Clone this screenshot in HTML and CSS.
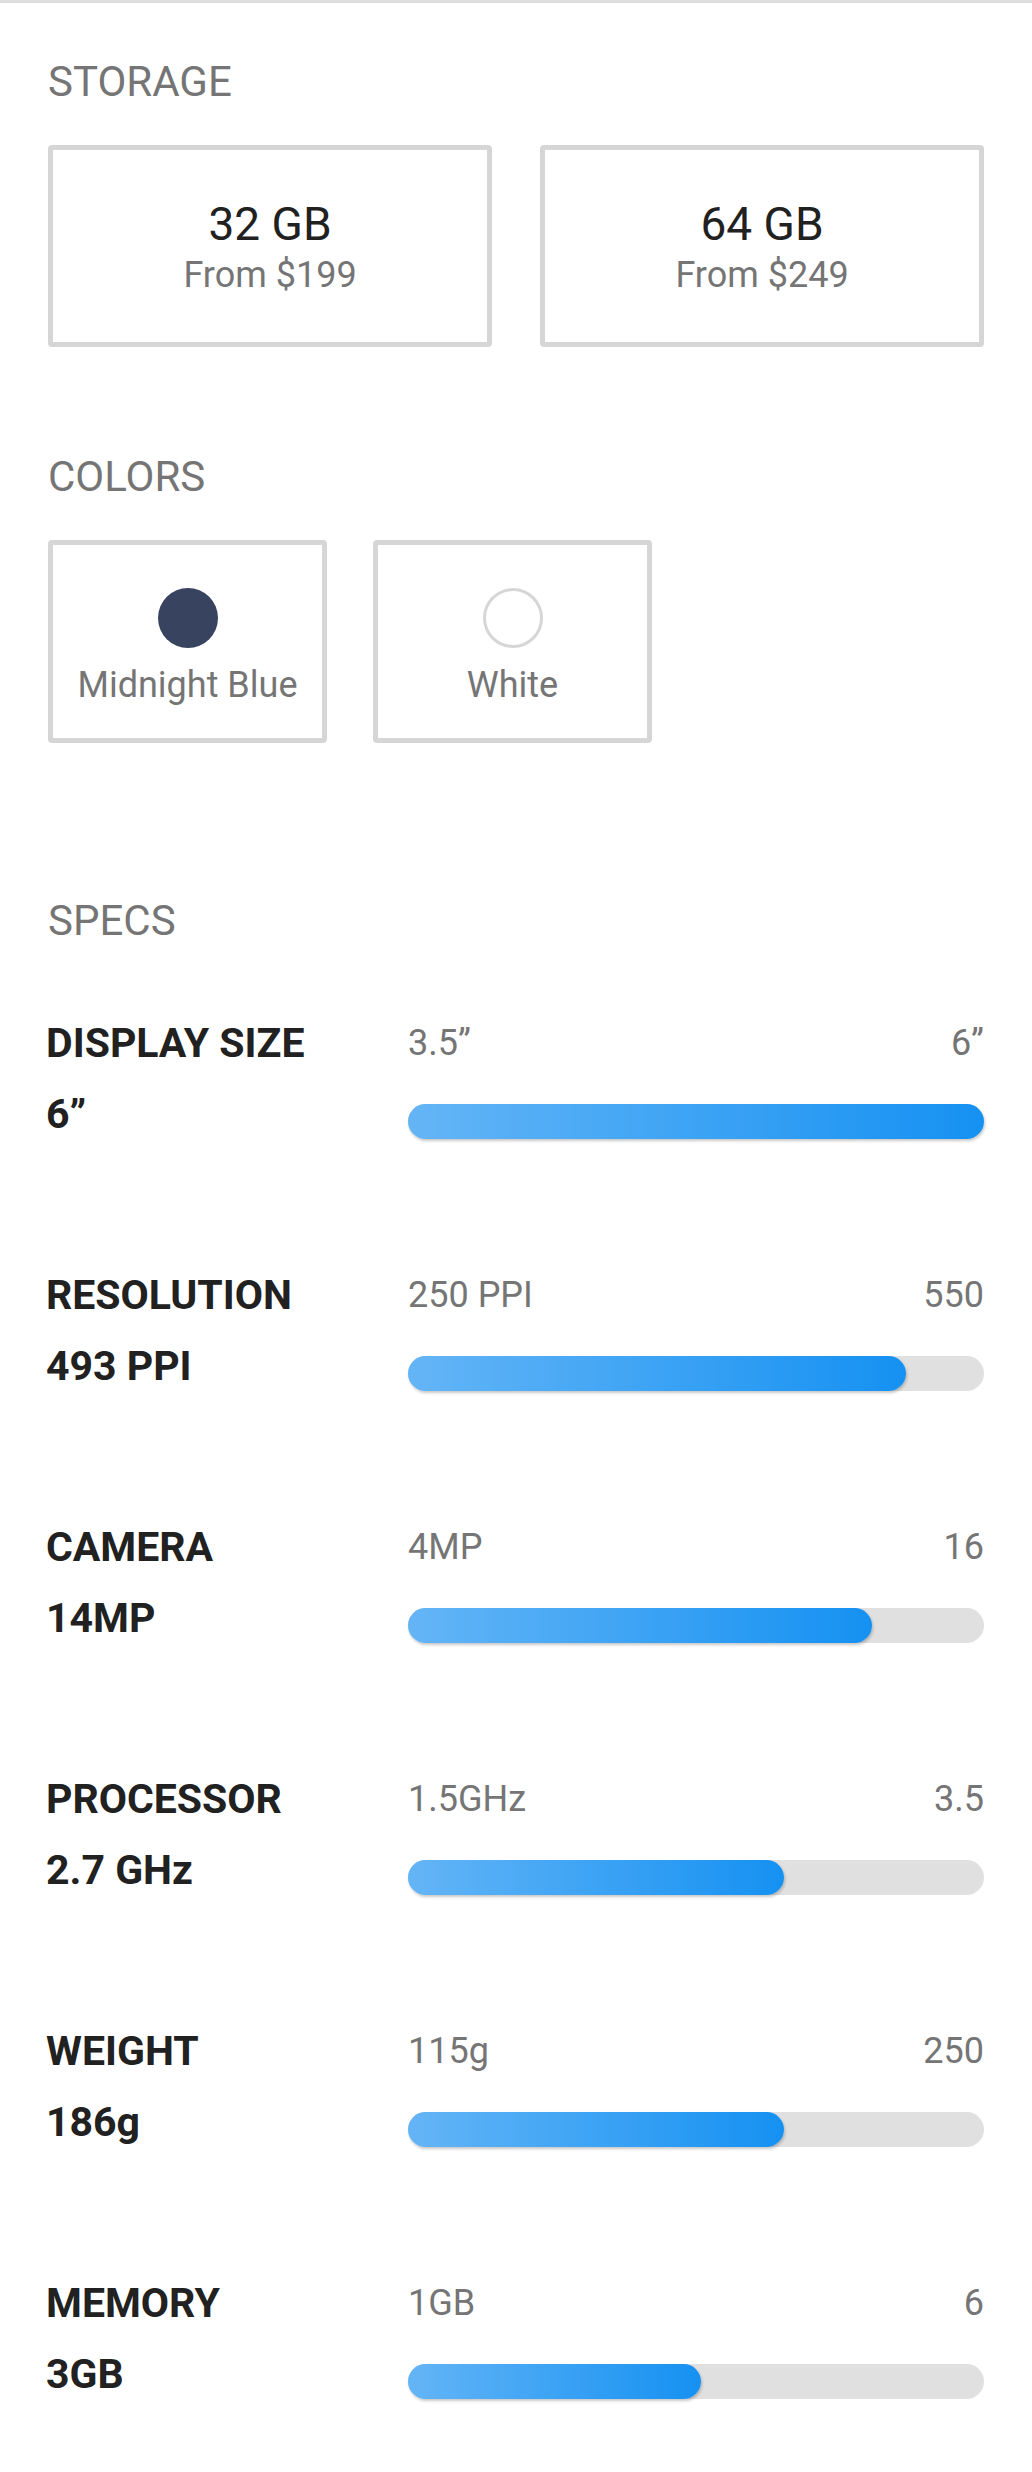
FILE: index.html
```html
<!DOCTYPE html>
<html lang="en">
<head>
<meta charset="utf-8">
<title>Phone options</title>
<link rel="stylesheet" href="styles.css">
</head>
<body>
<div class="topline"></div>
<main class="page">
  <section class="group">
    <h2 class="heading">STORAGE</h2>
    <div class="storage-grid">
      <div class="option storage">
        <div class="size">32 GB</div>
        <div class="price">From $199</div>
      </div>
      <div class="option storage">
        <div class="size">64 GB</div>
        <div class="price">From $249</div>
      </div>
    </div>
  </section>

  <section class="group colors-group">
    <h2 class="heading">COLORS</h2>
    <div class="color-grid">
      <div class="option color">
        <span class="swatch swatch-blue"></span>
        <div class="color-name">Midnight Blue</div>
      </div>
      <div class="option color">
        <span class="swatch swatch-white"></span>
        <div class="color-name">White</div>
      </div>
    </div>
  </section>

  <section class="group specs-group">
    <h2 class="heading">SPECS</h2>
    <div class="specs">
      <div class="spec">
        <div class="spec-left">
          <div class="spec-label">DISPLAY SIZE</div>
          <div class="spec-value">6”</div>
        </div>
        <div class="spec-right">
          <div class="range"><span>3.5”</span><span>6”</span></div>
          <div class="track"><div class="fill" style="width:100%"></div></div>
        </div>
      </div>
      <div class="spec">
        <div class="spec-left">
          <div class="spec-label">RESOLUTION</div>
          <div class="spec-value">493 PPI</div>
        </div>
        <div class="spec-right">
          <div class="range"><span>250 PPI</span><span>550</span></div>
          <div class="track"><div class="fill" style="width:86.5%"></div></div>
        </div>
      </div>
      <div class="spec">
        <div class="spec-left">
          <div class="spec-label">CAMERA</div>
          <div class="spec-value">14MP</div>
        </div>
        <div class="spec-right">
          <div class="range"><span>4MP</span><span>16</span></div>
          <div class="track"><div class="fill" style="width:80.6%"></div></div>
        </div>
      </div>
      <div class="spec">
        <div class="spec-left">
          <div class="spec-label">PROCESSOR</div>
          <div class="spec-value">2.7 GHz</div>
        </div>
        <div class="spec-right">
          <div class="range"><span>1.5GHz</span><span>3.5</span></div>
          <div class="track"><div class="fill" style="width:65.3%"></div></div>
        </div>
      </div>
      <div class="spec">
        <div class="spec-left">
          <div class="spec-label">WEIGHT</div>
          <div class="spec-value">186g</div>
        </div>
        <div class="spec-right">
          <div class="range"><span>115g</span><span>250</span></div>
          <div class="track"><div class="fill" style="width:65.3%"></div></div>
        </div>
      </div>
      <div class="spec">
        <div class="spec-left">
          <div class="spec-label">MEMORY</div>
          <div class="spec-value">3GB</div>
        </div>
        <div class="spec-right">
          <div class="range"><span>1GB</span><span>6</span></div>
          <div class="track"><div class="fill" style="width:50.9%"></div></div>
        </div>
      </div>
    </div>
  </section>
</main>
</body>
</html>
```

FILE: styles.css
```css
* {
  box-sizing: border-box;
}

html, body {
  margin: 0;
  padding: 0;
  background: #ffffff;
}

body {
  font-family: Roboto, "Noto Sans", "Liberation Sans", sans-serif;
  color: #212121;
  width: 1032px;
  min-height: 2472px;
}

.topline {
  height: 3px;
  background: #dedede;
}

.page {
  padding: 0 48px;
}

.heading {
  margin: 0 0 38px;
  font-size: 42px;
  line-height: 50px;
  font-weight: 400;
  color: #757575;
}

.group {
  padding-top: 54px;
}

.colors-group {
  padding-top: 105px;
}

.specs-group {
  padding-top: 153px;
}

.specs-group .heading {
  margin-bottom: 73px;
}

.storage-grid {
  display: grid;
  grid-template-columns: 1fr 1fr;
  gap: 48px;
}

.color-grid {
  display: grid;
  grid-template-columns: repeat(3, 279px);
  gap: 46px;
}

.option {
  border: 5px solid #d6d6d6;
  border-radius: 4px;
  background: #fff;
  display: flex;
  flex-direction: column;
  align-items: center;
}

.storage {
  padding: 48px 0 45px;
}

.size {
  font-size: 46px;
  line-height: 52px;
  color: #212121;
}

.price {
  margin-top: 3px;
  font-size: 36px;
  line-height: 44px;
  color: #757575;
}

.color {
  padding: 43px 0 31px;
}

.swatch {
  display: block;
  width: 60px;
  height: 60px;
  border-radius: 50%;
}

.swatch-blue {
  background: #38435f;
}

.swatch-white {
  background: #fff;
  border: 3px solid #d6d6d6;
}

.color-name {
  margin-top: 15px;
  font-size: 36px;
  line-height: 44px;
  color: #757575;
}

.specs {
  display: flex;
  flex-direction: column;
  gap: 132px;
}

.spec {
  display: grid;
  grid-template-columns: 360px 1fr;
}

.spec-left {
  margin-left: -2px;
}

.spec-label,
.spec-value {
  font-size: 41px;
  line-height: 48px;
  font-weight: 700;
  color: #212121;
}

.spec-value {
  margin-top: 23px;
}

.range {
  display: flex;
  justify-content: space-between;
  font-size: 36px;
  line-height: 48px;
  color: #757575;
}

.track {
  margin-top: 37px;
  height: 35px;
  border-radius: 18px;
  background: #e0e0e0;
}

.fill {
  height: 100%;
  border-radius: 18px;
  background: linear-gradient(90deg, #64b5f6 0%, #1591f2 100%);
  box-shadow: 1px 2px 3px rgba(0, 0, 0, 0.22);
}
```
